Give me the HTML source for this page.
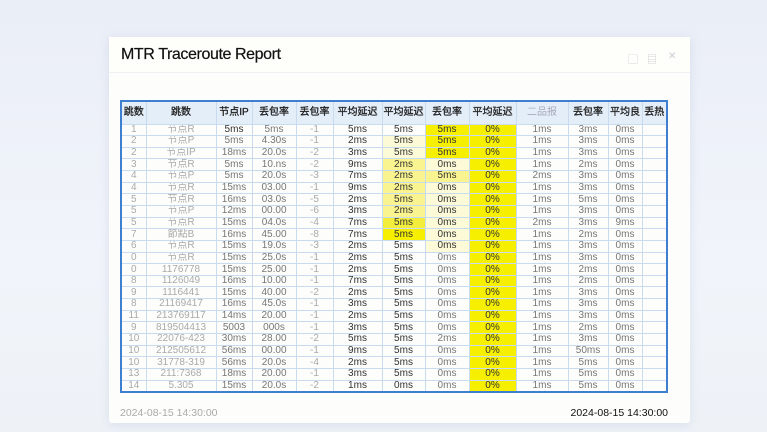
<!DOCTYPE html>
<html><head><meta charset="utf-8"><style>
*{margin:0;padding:0;box-sizing:border-box}
body{width:767px;height:432px;overflow:hidden;background:linear-gradient(180deg,#eaeef7 0%,#f1f4fa 60%,#eef2f7 100%);font-family:"Liberation Sans","Noto Sans CJK SC",sans-serif;position:relative}
.win{position:absolute;left:109px;top:37px;width:581px;height:386px;background:#fdfdfc;box-shadow:0 2px 10px rgba(150,165,200,.25);border-radius:3px}
.tb{height:36px;border-bottom:1px solid #eef0f4;background:#fefefb}
.title{position:absolute;left:12px;top:9px;font-size:16px;color:#111;letter-spacing:-0.4px;-webkit-text-stroke:0.2px #111}
.ic{position:absolute;top:14px;color:#c9ccd2;font-size:10px}
table{position:absolute;left:11px;top:63px;border-collapse:collapse;border:2px solid #3f7fcf;table-layout:fixed}
td,th{border:1px solid #c9dbee;font-size:10px;text-align:center;height:11.65px;line-height:10px;padding:0;white-space:nowrap;overflow:hidden;color:#333}
th{height:23px;background:#e4eef9;font-weight:normal;color:#222;font-size:10px;-webkit-text-stroke:0.3px #222}
td.g{color:#aaa}td.m{color:#777}
.y{background:#f6ef00}.p{background:#faf490}.q{background:#fdfad8}.r{background:#f3ee3c}
.foot{position:absolute;top:370px;font-size:10.5px}
</style></head><body>
<div class="win">
<div class="tb"></div>
<div class="title">MTR Traceroute Report</div>
<div class="ic" style="left:519px">▢</div><div class="ic" style="left:538px">▤</div><div class="ic" style="left:559px">✕</div>
<table>
<colgroup><col style="width:25px"><col style="width:70px"><col style="width:36px"><col style="width:44px"><col style="width:37px"><col style="width:49px"><col style="width:43px"><col style="width:44px"><col style="width:47px"><col style="width:52px"><col style="width:40px"><col style="width:34px"><col style="width:25px"></colgroup>
<tr><th>跳数</th><th>跳数</th><th>节点IP</th><th>丢包率</th><th>丢包率</th><th>平均延迟</th><th>平均延迟</th><th>丢包率</th><th>平均延迟</th><th style="color:#aab;-webkit-text-stroke:0">二品报</th><th>丢包率</th><th>平均良</th><th>丢热</th></tr>
<tr><td class="g">1</td><td class="g">节点R</td><td>5ms</td><td class="m">5ms</td><td class="g">-1</td><td>5ms</td><td>5ms</td><td class="y">5ms</td><td class="y">0%</td><td class="m">1ms</td><td class="m">3ms</td><td class="m">0ms</td><td></td></tr>
<tr><td class="g">2</td><td class="g">节点P</td><td class="m">5ms</td><td class="m">4.30s</td><td class="g">-1</td><td>2ms</td><td class="q">5ms</td><td class="y">5ms</td><td class="y">0%</td><td class="m">1ms</td><td class="m">3ms</td><td class="m">0ms</td><td></td></tr>
<tr><td class="g">2</td><td class="g">节点IP</td><td class="m">18ms</td><td class="m">20.0s</td><td class="g">-2</td><td>3ms</td><td class="q">5ms</td><td class="y">5ms</td><td class="y">0%</td><td class="m">1ms</td><td class="m">3ms</td><td class="m">0ms</td><td></td></tr>
<tr><td class="g">3</td><td class="g">节点R</td><td class="m">5ms</td><td class="m">10.ns</td><td class="g">-2</td><td>9ms</td><td class="p">2ms</td><td class="q">0ms</td><td class="y">0%</td><td class="m">1ms</td><td class="m">2ms</td><td class="m">0ms</td><td></td></tr>
<tr><td class="g">4</td><td class="g">节点P</td><td class="m">5ms</td><td class="m">20.0s</td><td class="g">-3</td><td>7ms</td><td class="p">2ms</td><td class="p">5ms</td><td class="y">0%</td><td class="m">2ms</td><td class="m">3ms</td><td class="m">0ms</td><td></td></tr>
<tr><td class="g">4</td><td class="g">节点R</td><td class="m">15ms</td><td class="m">03.00</td><td class="g">-1</td><td>9ms</td><td class="p">2ms</td><td class="q">0ms</td><td class="y">0%</td><td class="m">1ms</td><td class="m">3ms</td><td class="m">0ms</td><td></td></tr>
<tr><td class="g">5</td><td class="g">节点R</td><td class="m">16ms</td><td class="m">03.0s</td><td class="g">-5</td><td>2ms</td><td class="p">5ms</td><td class="q">0ms</td><td class="y">0%</td><td class="m">1ms</td><td class="m">5ms</td><td class="m">0ms</td><td></td></tr>
<tr><td class="g">5</td><td class="g">节点P</td><td class="m">12ms</td><td class="m">00.00</td><td class="g">-6</td><td>3ms</td><td class="p">2ms</td><td class="q">0ms</td><td class="y">0%</td><td class="m">1ms</td><td class="m">3ms</td><td class="m">0ms</td><td></td></tr>
<tr><td class="g">5</td><td class="g">节点R</td><td class="m">15ms</td><td class="m">04.0s</td><td class="g">-4</td><td>7ms</td><td class="r">5ms</td><td class="q">0ms</td><td class="y">0%</td><td class="m">2ms</td><td class="m">3ms</td><td class="m">9ms</td><td></td></tr>
<tr><td class="g">7</td><td class="g">節點B</td><td class="m">16ms</td><td class="m">45.00</td><td class="g">-8</td><td>7ms</td><td class="y">5ms</td><td class="q">0ms</td><td class="y">0%</td><td class="m">1ms</td><td class="m">2ms</td><td class="m">0ms</td><td></td></tr>
<tr><td class="g">6</td><td class="g">节点R</td><td class="m">15ms</td><td class="m">19.0s</td><td class="g">-3</td><td>2ms</td><td>5ms</td><td class="q">0ms</td><td class="y">0%</td><td class="m">1ms</td><td class="m">3ms</td><td class="m">0ms</td><td></td></tr>
<tr><td class="g">0</td><td class="g">节点R</td><td class="m">15ms</td><td class="m">25.0s</td><td class="g">-1</td><td>2ms</td><td>5ms</td><td class="m">0ms</td><td class="y">0%</td><td class="m">1ms</td><td class="m">3ms</td><td class="m">0ms</td><td></td></tr>
<tr><td class="g">0</td><td class="g">1176778</td><td class="m">15ms</td><td class="m">25.00</td><td class="g">-1</td><td>2ms</td><td>5ms</td><td class="m">0ms</td><td class="y">0%</td><td class="m">1ms</td><td class="m">2ms</td><td class="m">0ms</td><td></td></tr>
<tr><td class="g">8</td><td class="g">1126049</td><td class="m">16ms</td><td class="m">10.00</td><td class="g">-1</td><td>7ms</td><td>5ms</td><td class="m">0ms</td><td class="y">0%</td><td class="m">1ms</td><td class="m">2ms</td><td class="m">0ms</td><td></td></tr>
<tr><td class="g">9</td><td class="g">1116441</td><td class="m">15ms</td><td class="m">40.00</td><td class="g">-2</td><td>2ms</td><td>5ms</td><td class="m">0ms</td><td class="y">0%</td><td class="m">1ms</td><td class="m">3ms</td><td class="m">0ms</td><td></td></tr>
<tr><td class="g">8</td><td class="g">21169417</td><td class="m">16ms</td><td class="m">45.0s</td><td class="g">-1</td><td>3ms</td><td>5ms</td><td class="m">0ms</td><td class="y">0%</td><td class="m">1ms</td><td class="m">3ms</td><td class="m">0ms</td><td></td></tr>
<tr><td class="g">11</td><td class="g">213769117</td><td class="m">14ms</td><td class="m">20.00</td><td class="g">-1</td><td>2ms</td><td>5ms</td><td class="m">0ms</td><td class="y">0%</td><td class="m">1ms</td><td class="m">3ms</td><td class="m">0ms</td><td></td></tr>
<tr><td class="g">9</td><td class="g">819504413</td><td class="m">5003</td><td class="m">000s</td><td class="g">-1</td><td>3ms</td><td>5ms</td><td class="m">0ms</td><td class="y">0%</td><td class="m">1ms</td><td class="m">2ms</td><td class="m">0ms</td><td></td></tr>
<tr><td class="g">10</td><td class="g">22076-423</td><td class="m">30ms</td><td class="m">28.00</td><td class="g">-2</td><td>5ms</td><td>5ms</td><td class="m">2ms</td><td class="y">0%</td><td class="m">1ms</td><td class="m">3ms</td><td class="m">0ms</td><td></td></tr>
<tr><td class="g">10</td><td class="g">212505612</td><td class="m">56ms</td><td class="m">00.00</td><td class="g">-1</td><td>9ms</td><td>5ms</td><td class="m">0ms</td><td class="y">0%</td><td class="m">1ms</td><td class="m">50ms</td><td class="m">0ms</td><td></td></tr>
<tr><td class="g">10</td><td class="g">31778-319</td><td class="m">56ms</td><td class="m">20.0s</td><td class="g">-4</td><td>2ms</td><td>5ms</td><td class="m">0ms</td><td class="y">0%</td><td class="m">1ms</td><td class="m">5ms</td><td class="m">0ms</td><td></td></tr>
<tr><td class="g">13</td><td class="g">211:7368</td><td class="m">18ms</td><td class="m">20.00</td><td class="g">-1</td><td>3ms</td><td>5ms</td><td class="m">0ms</td><td class="y">0%</td><td class="m">1ms</td><td class="m">5ms</td><td class="m">0ms</td><td></td></tr>
<tr><td class="g">14</td><td class="g">5.305</td><td class="m">15ms</td><td class="m">20.0s</td><td class="g">-2</td><td>1ms</td><td>0ms</td><td class="m">0ms</td><td class="y">0%</td><td class="m">1ms</td><td class="m">5ms</td><td class="m">0ms</td><td></td></tr>
</table>
<div class="foot" style="left:11px;color:#aaa">2024-08-15 14:30:00</div>
<div class="foot" style="right:22px;color:#111">2024-08-15 14:30:00</div>
</div>
</body></html>
